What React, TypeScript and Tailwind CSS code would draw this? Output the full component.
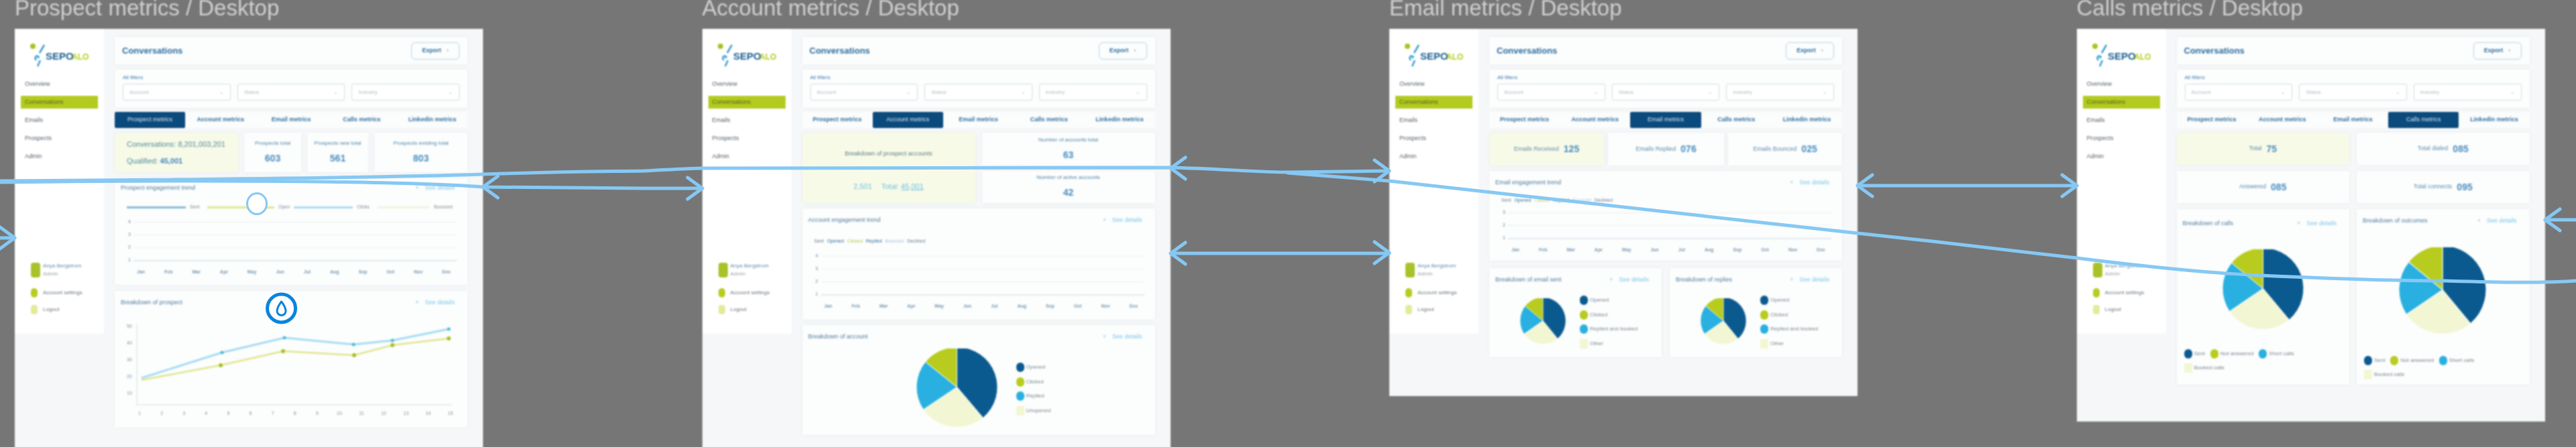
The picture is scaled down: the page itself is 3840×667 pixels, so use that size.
import React from "react";

const C = { dark: "#0b5a8f", lime: "#b7cc1f", cyan: "#29b0e0", cream: "#f3f6d2" };
const MONTHS = ["Jan", "Feb", "Mar", "Apr", "May", "Jun", "Jul", "Aug", "Sep", "Oct", "Nov", "Dec"];
const TABS = ["Prospect metrics", "Account metrics", "Email metrics", "Calls metrics", "Linkedin metrics"];
const NAV = ["Overview", "Conversations", "Emails", "Prospects", "Admin"];

function slice(a0: number, a1: number, cx: number, cy: number, r: number) {
  const p = (a: number) => {
    const t = ((a - 90) * Math.PI) / 180;
    return `${cx + r * Math.cos(t)} ${cy + r * Math.sin(t)}`;
  };
  return `M${cx} ${cy}L${p(a0)}A${r} ${r} 0 ${a1 - a0 > 180 ? 1 : 0} 1 ${p(a1)}Z`;
}

function Pie({ className }: { className: string }) {
  const parts: [number, number, string][] = [
    [0, 140, C.dark],
    [140, 236, C.cream],
    [236, 309, C.cyan],
    [309, 360, C.lime],
  ];
  return (
    <svg viewBox="0 0 100 100" preserveAspectRatio="none" className={className}>
      {parts.map(([a, b, c]) => (
        <path key={c} d={slice(a, b, 50, 48, 50)} fill={c} stroke="#ffffff" strokeWidth="0.8" />
      ))}
    </svg>
  );
}

function Logo() {
  return (
    <svg width="92" height="38" viewBox="0 0 92 38" className="ml-[22px] mt-[20px]">
      <circle cx="5" cy="6" r="4" fill="#a4c520" />
      <path d="M22 4 L15 16 M12 20 Q6 22 10 27 M16 27 L12 36" stroke="#3d9ccb" strokeWidth="2.5" fill="none" />
      <circle cx="13" cy="22" r="2" fill="#29b0e0" />
      <text x="24" y="26" fontSize="15" fontWeight="700" fontFamily="Liberation Sans, sans-serif" fill="#1c5f92">SEPO</text>
      <text x="63" y="26" fontSize="12" fontWeight="700" fontFamily="Liberation Sans, sans-serif" fill="#b7cc1f">ALO</text>
    </svg>
  );
}

function Sidebar() {
  return (
    <div className="w-[133px] h-[455px] bg-white flex flex-col shrink-0">
      <div className="h-[73px]">
        <Logo />
      </div>
      <div className="flex flex-col gap-[8px]">
        {NAV.map((n, i) => (
          <div
            key={n}
            className={
              i === 1
                ? "mx-[9px] h-[19px] pl-[6px] flex items-center text-[9px] text-[#4f6420] bg-[#b3ca1e]"
                : "mx-[9px] h-[19px] pl-[6px] flex items-center text-[9px] text-[#55606a]"
            }
          >
            {n}
          </div>
        ))}
      </div>
      <div className="mt-auto mb-[24px] pl-[24px] flex flex-col text-[#6b7780]">
        <div className="flex items-center gap-[4px] h-[30px]">
          <div className="w-[14px] h-[22px] rounded-sm bg-[#a9c22a]" />
          <div className="text-[8px] leading-[12px] text-[#5b8bb0]">
            Anya Bergstrom
            <div className="text-[#9aa5ad]">Admin</div>
          </div>
        </div>
        <div className="flex items-center gap-[8px] h-[25px] mt-[6px] text-[8px]">
          <div className="w-[10px] h-[14px] rounded-full bg-[#b7cc1f]" />
          Account settings
        </div>
        <div className="flex items-center gap-[8px] h-[25px] text-[8px]">
          <div className="w-[10px] h-[14px] rounded-sm bg-[#e4ea9c]" />
          Logout
        </div>
      </div>
    </div>
  );
}

function Card({ className, children }: { className?: string; children?: React.ReactNode }) {
  return <div className={`bg-[#fcfdfd] shadow-[0_0_5px_rgba(20,60,90,0.06)] ${className ?? ""}`}>{children}</div>;
}

function Select({ label }: { label: string }) {
  return (
    <div className="flex-1 h-[25px] rounded-[3px] border border-[#d3dade] bg-white flex items-center justify-between px-[9px] text-[8px] text-[#b3bcc2]">
      {label}
      <span className="text-[8px]">⌄</span>
    </div>
  );
}

function Top({ tab }: { tab: number }) {
  return (
    <>
      <Card className="h-[41px] flex items-center justify-between pl-[11px] pr-[12px]">
        <div className="text-[13px] font-bold text-[#2c6d9e]">Conversations</div>
        <div className="w-[72px] h-[26px] rounded-[6px] border border-[#b5d3e6] flex items-center justify-center gap-[8px] text-[9px] font-bold text-[#2c6d9e]">
          Export <span className="text-[#8fb6cf]">›</span>
        </div>
      </Card>
      <Card className="h-[57px] mt-[8px] px-[12px] pt-[6px]">
        <div className="text-[8px] leading-[12px] h-[15px] text-[#3d7cab]">All filters</div>
        <div className="flex gap-[10px]">
          <Select label="Account" />
          <Select label="Status" />
          <Select label="Industry" />
        </div>
      </Card>
      <div className="h-[24px] mt-[6px] grid grid-cols-5 bg-[#fbfcfc]">
        {TABS.map((t, i) => (
          <div
            key={t}
            className={
              i === tab
                ? "flex items-center justify-center text-[9px] rounded-[2px] text-[#dbe8f2] bg-[#0b4a7c]"
                : "flex items-center justify-center text-[9px] font-bold text-[#2f6f9f]"
            }
          >
            {t}
          </div>
        ))}
      </div>
    </>
  );
}

function Num({ v }: { v: string }) {
  return <div className="text-[14px] font-bold text-[#4a8fc0]">{v}</div>;
}

function Metric({ label, v, className }: { label: string; v: string; className: string }) {
  return (
    <Card className={`flex flex-col items-center justify-center gap-[6px] text-[8px] text-[#4d86ad] ${className}`}>
      {label}
      <Num v={v} />
    </Card>
  );
}

function Inline({ label, v, className }: { label: string; v: string; className: string }) {
  return (
    <Card className={`flex items-center justify-center gap-[7px] text-[9px] text-[#5d8cae] ${className}`}>
      {label}
      <Num v={v} />
    </Card>
  );
}

function Head({ title, pad = "h-[36px]" }: { title: string; pad?: string }) {
  return (
    <div className={`${pad} flex items-center justify-between pl-[9px] pr-[19px]`}>
      <div className="text-[9px] text-[#4f7c9c]">{title}</div>
      <div className="text-[9px] text-[#7cc6ea] flex gap-[9px]">
        <span>+</span> See details
      </div>
    </div>
  );
}

function Grid({ rows }: { rows: string[] }) {
  return (
    <div className="pl-[20px] pr-[16px]">
      {rows.map((r, i) => (
        <div key={r} className="h-[19px] flex items-center gap-[4px] text-[7px] text-[#6f8a9c]">
          <span className="w-[4px]">{r}</span>
          <div className={i === rows.length - 1 ? "flex-1 h-[2px] bg-[#e2eaef]" : "flex-1 h-[1px] bg-[#edf0f2]"} />
        </div>
      ))}
      <div className="h-[16px] flex justify-between items-center pl-[13px] pr-[9px] text-[7px] font-bold text-[#7b9bb2]">
        {MONTHS.map((m) => (
          <span key={m}>{m}</span>
        ))}
      </div>
    </div>
  );
}

function TextLegend({ className }: { className: string }) {
  return (
    <div className={`flex items-center gap-[5px] pl-[18px] text-[7px] text-[#6c7f8d] ${className}`}>
      <span>Sent</span>
      <span className="text-[#2c6d9e]">Opened</span>
      <span className="text-[#b9c95a]">Clicked</span>
      <span className="text-[#2c6d9e]">Replied</span>
      <span className="text-[#a9c6d8]">Bounced</span>
      <span>Declined</span>
    </div>
  );
}

function BarLegend() {
  return (
    <div className="h-[26px] flex items-center pl-[18px] text-[7px] text-[#7e8c96]">
      <div className="w-[88px] h-[3px] bg-[#7fbdd4]" />
      <span className="ml-[6px] w-[26px]">Sent</span>
      <div className="w-[100px] h-[3px] bg-[#dfe68a]" />
      <span className="ml-[6px] w-[23px]">Open</span>
      <div className="w-[88px] h-[3px] bg-[#a9dcf2]" />
      <span className="ml-[6px] w-[31px]">Clicks</span>
      <div className="w-[77px] h-[3px] bg-[#f1f2e2]" />
      <span className="ml-[7px]">Bounced</span>
    </div>
  );
}

function Dot({ c, label, square }: { c: string; label: string; square?: boolean }) {
  return (
    <div className="flex items-center gap-[3px] h-[14px] text-[8px] whitespace-nowrap text-[#7a8790]">
      <span className={square ? "w-[12px] h-[14px]" : "w-[12px] h-[14px] rounded-full"} style={{ background: c }} />
      {label}
    </div>
  );
}

function PieLegendCol({ long }: { long?: boolean }) {
  return (
    <div className="flex flex-col gap-[7.7px]">
      <Dot c={C.dark} label="Opened" />
      <Dot c={C.lime} label="Clicked" />
      <Dot c={C.cyan} label={long ? "Replied and booked" : "Replied"} />
      <Dot c={C.cream} label={long ? "Other" : "Unopened"} square />
    </div>
  );
}

function PieLegendRows() {
  return (
    <div className="flex flex-col gap-[7px] pl-[11px]">
      <div className="flex gap-[8px]">
        <Dot c={C.dark} label="Sent" />
        <Dot c={C.lime} label="Not answered" />
        <Dot c={C.cyan} label="Short calls" />
      </div>
      <Dot c={C.cream} label="Booked calls" square />
    </div>
  );
}

function LineChart() {
  const blue = "211,564 331,526 424,504 527,514 585,508 669,491";
  const lime = "211,567 329,545 422,524 528,530 585,515 669,505";
  const ys: [string, number][] = [["50", 486], ["40", 511], ["30", 536], ["20", 561], ["10", 586]];
  const xs = Array.from({ length: 15 }, (_, i) => i + 1);
  return (
    <svg viewBox="171 470 526 160" className="w-[526px] h-[160px] block">
      <path d="M204 484V604H674" stroke="#e3e8eb" strokeWidth="1.5" fill="none" />
      {ys.map(([t, y]) => (
        <text key={t} x="193" y={y + 3} fontSize="7" textAnchor="middle" fill="#7f929f" fontFamily="Liberation Sans, sans-serif">{t}</text>
      ))}
      {xs.map((n, i) => (
        <text key={n} x={208 + i * 33.1} y="619" fontSize="7" textAnchor="middle" fill="#7f929f" fontFamily="Liberation Sans, sans-serif">{n}</text>
      ))}
      <polyline points={lime} fill="none" stroke="#dfe68a" strokeWidth="2.5" />
      <polyline points={blue} fill="none" stroke="#a5dcf3" strokeWidth="3" />
      {lime.split(" ").slice(1).map((p) => {
        const [x, y] = p.split(",");
        return <circle key={p} cx={x} cy={y} r="3" fill="#a9bf22" />;
      })}
      {blue.split(" ").slice(1).map((p) => {
        const [x, y] = p.split(",");
        return <circle key={p} cx={x} cy={y} r="2.5" fill="#4fbbd6" />;
      })}
    </svg>
  );
}

function Frame({ title, h, tab, children }: { title: string; h: string; tab: number; children: React.ReactNode }) {
  return (
    <div className="w-[698px] shrink-0">
      <div className="h-[43px] text-[33px] leading-[24px] whitespace-nowrap text-[#d0d0d0] blur-[1px]">{title}</div>
      <div className={`flex bg-[#f5f7f8] blur-[1.1px] overflow-hidden ${h}`}>
        <Sidebar />
        <div className="flex-1 pl-[16px] pr-[23px] pt-[12px] min-w-0">
          <Top tab={tab} />
          {children}
        </div>
      </div>
    </div>
  );
}

function Arrow({ x, y, dir }: { x: number; y: number; dir: 1 | -1 }) {
  return <path d={`M${x + dir * 22} ${y - 16}L${x} ${y}L${x + dir * 22} ${y + 16}`} />;
}

function Overlay() {
  return (
    <svg
      viewBox="0 0 3840 667"
      className="absolute left-0 top-0 w-[3840px] h-[667px] pointer-events-none blur-[0.5px]"
      fill="none"
      stroke="#86c8f3"
      strokeWidth="5"
      strokeLinecap="round"
      strokeLinejoin="round"
    >
      <path d="M0 270C300 268 600 264 720 260S900 256 960 255C1000 253 1030 251 1047 251L1745 250C1820 252 1880 257 1920 257L2071 255" />
      <path d="M0 272C300 268 600 270 720 279L960 281L1047 281" />
      <path d="M0 355H22" />
      <path d="M1745 378H2071" />
      <path d="M2769 277H3096" />
      <path d="M3794 328H3840" />
      <path d="M1920 258L2071 270L2769 348L2880 360L3096 385C3200 398 3300 408 3370 411C3500 417 3600 419 3645 419C3720 421 3790 423 3840 419" />
      <Arrow x={22} y={355} dir={-1} />
      <Arrow x={720} y={279} dir={1} />
      <Arrow x={1047} y={281} dir={-1} />
      <Arrow x={1745} y={251} dir={1} />
      <Arrow x={1745} y={378} dir={1} />
      <Arrow x={2071} y={255} dir={-1} />
      <Arrow x={2071} y={377} dir={-1} />
      <Arrow x={2769} y={277} dir={1} />
      <Arrow x={3096} y={277} dir={-1} />
      <Arrow x={3794} y={328} dir={1} />
      <ellipse cx="383" cy="304" rx="14.5" ry="15.5" fill="#ffffff" strokeWidth="3" />
      <circle cx="419.5" cy="460" r="21" fill="#ffffff" stroke="#0a84dc" strokeWidth="5" />
      <path d="M419.5 450C415 456 413 460 413 464A6.5 6.5 0 0 0 426 464C426 460 424 456 419.5 450Z" stroke="#0a84dc" strokeWidth="3" />
    </svg>
  );
}

export default function App() {
  return (
    <div className="relative w-[3840px] h-[667px] overflow-hidden bg-[#767676] font-['Liberation_Sans',sans-serif]">
      <div className="flex gap-[326.5px] pl-[22px]">
        <Frame title="Prospect metrics / Desktop" h="h-[640px]" tab={0}>
          <div className="flex gap-[9px] mt-[7px] h-[59px]">
            <Card className="!bg-[#f8fae8] w-[184px] flex flex-col justify-center gap-[8px] pl-[18px] text-[11px] text-[#4f8a99]">
              <div>Conversations: 8,201,003,201</div>
              <div>
                Qualified: <span className="font-bold text-[#3d85bd]">45,001</span>
              </div>
            </Card>
            <Metric label="Prospects total" v="603" className="w-[85px]" />
            <Metric label="Prospects new total" v="561" className="w-[91px]" />
            <Metric label="Prospects existing total" v="803" className="flex-1" />
          </div>
          <Card className="h-[159px] mt-[9px]">
            <Head title="Prospect engagement trend" pad="h-[30px]" />
            <BarLegend />
            <Grid rows={["4", "3", "2", "1"]} />
          </Card>
          <Card className="h-[204px] mt-[9px]">
            <Head title="Breakdown of prospect" />
            <LineChart />
          </Card>
        </Frame>

        <Frame title="Account metrics / Desktop" h="h-[640px]" tab={1}>
          <div className="grid grid-cols-2 gap-x-[10px] gap-y-[8px] mt-[7px] h-[105px]">
            <Card className="!bg-[#f8fae8] row-span-2 flex flex-col items-center text-[#5d7d80] text-[9px]">
              <div className="mt-[25px]">Breakdown of prospect accounts</div>
              <div className="mt-[33px] flex gap-[14px] text-[11px] text-[#6bbfe0]">
                <span>2,501</span>
                <span>Total: <span className="underline">45,001</span></span>
              </div>
            </Card>
            <Metric label="Number of accounts total" v="63" className="" />
            <Metric label="Number of active accounts" v="42" className="" />
          </div>
          <Card className="h-[166px] mt-[8px]">
            <Head title="Account engagement trend" />
            <TextLegend className="h-[26px]" />
            <Grid rows={["4", "3", "2", "1"]} />
          </Card>
          <Card className="h-[164px] mt-[8px]">
            <Head title="Breakdown of account" />
            <div className="flex pl-[170px]">
              <Pie className="w-[121px] h-[120px] -mt-px shrink-0" />
              <div className="ml-[28px] mt-[20px]">
                <PieLegendCol />
              </div>
            </div>
          </Card>
        </Frame>

        <Frame title="Email metrics / Desktop" h="h-[548px]" tab={2}>
          <div className="flex gap-[6px] mt-[7px] h-[49px]">
            <Inline label="Emails Received" v="125" className="!bg-[#f8fae8] w-[171px]" />
            <Inline label="Emails Replied" v="076" className="w-[173px]" />
            <Inline label="Emails Bounced" v="025" className="flex-1" />
          </div>
          <Card className="h-[134px] mt-[8px]">
            <Head title="Email engagement trend" />
            <TextLegend className="h-[17px]" />
            <Grid rows={["3", "2", "1"]} />
          </Card>
          <div className="flex gap-[12px] mt-[11px] h-[133px]">
            {["Breakdown of email sent", "Breakdown of replies"].map((t) => (
              <Card key={t} className="flex-1">
                <Head title={t} />
                <div className="flex pl-[46px] pt-[9px]">
                  <Pie className="w-[68px] h-[70px] shrink-0" />
                  <div className="ml-[21px] -mt-[4px]">
                    <PieLegendCol long />
                  </div>
                </div>
              </Card>
            ))}
          </div>
        </Frame>

        <Frame title="Calls metrics / Desktop" h="h-[586px]" tab={3}>
          <div className="grid grid-cols-2 gap-x-[11px] gap-y-[9px] mt-[7px]">
            <Inline label="Total" v="75" className="!bg-[#f8fae8] h-[48px]" />
            <Inline label="Total dialed" v="085" className="h-[48px]" />
            <Inline label="Answered" v="085" className="h-[48px]" />
            <Inline label="Total connects" v="095" className="h-[48px]" />
          </div>
          <div className="grid grid-cols-2 gap-x-[11px] mt-[9px] h-[262px]">
            <Card>
              <Head title="Breakdown of calls" pad="h-[44px]" />
              <Pie className="w-[121px] h-[122px] ml-[68px] mt-[16px]" />
              <div className="mt-[27px]">
                <PieLegendRows />
              </div>
            </Card>
            <Card>
              <Head title="Breakdown of outcomes" />
              <Pie className="w-[130px] h-[132px] ml-[63px] mt-[21px]" />
              <div className="mt-[30px]">
                <PieLegendRows />
              </div>
            </Card>
          </div>
        </Frame>
      </div>
      <Overlay />
    </div>
  );
}
